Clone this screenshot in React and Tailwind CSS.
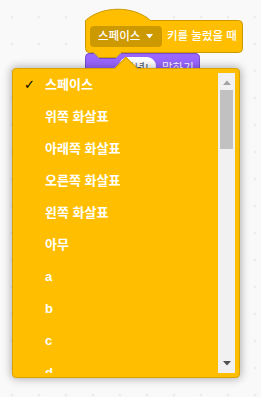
import React from "react";

const items = ["스페이스", "위쪽 화살표", "아래쪽 화살표", "오른쪽 화살표", "왼쪽 화살표", "아무", "a", "b", "c", "d"];

export default function App() {
  return (
    <div
      className="relative w-[261px] h-[397px] overflow-hidden bg-[#f9f9f9] bg-[radial-gradient(circle,#e3e3e3_0.9px,transparent_1.2px)] [background-size:27px_27px] [background-position:-1.5px_3.5px]"
      style={{ fontFamily: '"Liberation Sans", "Noto Sans CJK KR", sans-serif' }}
    >
      {/* block shapes */}
      <svg className="absolute left-0 top-0" width="261" height="397" viewBox="0 0 261 397">
        <path
          d="M89,53.5 H94 L99,58.5 H116 L121,53.5 H195 Q199.5,53.5 199.5,57.5 V100 H85.5 V57.5 Q85.5,53.5 89,53.5 Z"
          fill="#9966ff"
          stroke="#774dcb"
          strokeWidth="1"
        />
        <rect x="119" y="57" width="37" height="18" rx="9" fill="#ffffff" />
        <path
          d="M85.5,20.5 C102,5.5 134,5.5 150.5,20.5 H238.5 Q242.5,20.5 242.5,24.5 V48.5 Q242.5,52.5 238.5,52.5 H121 L116,57.5 H99 L94,52.5 H89.5 Q85.5,52.5 85.5,48.5 Z"
          fill="#ffbf00"
          stroke="#cc9900"
          strokeWidth="1"
        />
      </svg>

      {/* hat block contents */}
      <div className="absolute left-[90px] top-[26px] flex items-center gap-[5px]">
        <div className="flex h-[21px] w-[72px] items-center gap-[6px] rounded-[4px] bg-[#cc9900] pl-[8px] text-[11.5px] font-medium text-white">
          <span className="leading-none">스페이스</span>
          <svg width="7" height="5" viewBox="0 0 7 5">
            <path d="M0,0 H7 L3.5,4.5 Z" fill="#ffffff" />
          </svg>
        </div>
        <span className="text-[11.5px] font-medium leading-none text-white">키를 눌렀을 때</span>
      </div>

      {/* say block contents */}
      <div className="absolute left-[124px] top-[61px] flex items-center">
        <span className="w-[38px] text-[11.5px] leading-[14px] text-[#575e75]">안녕!</span>
        <span className="text-[11.5px] leading-[14px] text-white">말하기</span>
      </div>

      {/* dropdown menu */}
      <div className="absolute left-[12px] top-[68px] h-[310px] w-[228px] rounded-[4px] border border-[#d9a400] bg-[#ffbf00] shadow-[0_0_8px_1px_rgba(0,0,0,0.3)]">
        <div className="absolute left-[105px] top-[-9px] h-4 w-4 rotate-45 border-l border-t border-[#d9a400] bg-[#ffbf00]" />
        <div className="flex h-full py-[4px] pr-[4px]">
          <div className="flex-1 overflow-hidden">
            {items.map((t, i) => (
              <div key={t} className="flex h-8 items-start text-[13px] font-bold leading-[24px] text-white">
                <span className="w-[32px] pl-[11px] text-[13px] font-normal text-black" style={{ fontFamily: '"DejaVu Sans", sans-serif' }}>
                  {i === 0 ? "✓" : ""}
                </span>
                <span>{t}</span>
              </div>
            ))}
          </div>
          <div className="relative flex w-[17px] flex-col items-center bg-[#f1f1f1]">
            <svg className="mt-[7px]" width="8" height="5" viewBox="0 0 8 5">
              <path d="M0,5 H8 L4,0.5 Z" fill="#a3a3a3" />
            </svg>
            <div className="mt-[5px] h-[59px] w-[13px] bg-[#c1c1c1]" />
            <div className="flex-1" />
            <svg className="mb-[7px]" width="8" height="5" viewBox="0 0 8 5">
              <path d="M0,0 H8 L4,4.5 Z" fill="#505050" />
            </svg>
          </div>
        </div>
      </div>
    </div>
  );
}
